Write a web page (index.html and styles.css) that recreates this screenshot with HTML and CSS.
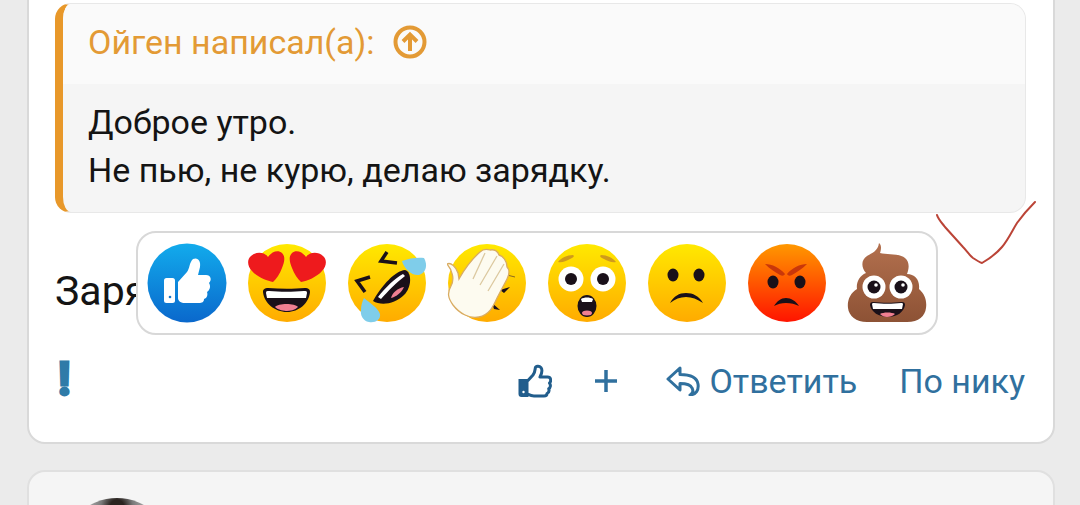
FILE: index.html
```html
<!DOCTYPE html>
<html lang="ru">
<head>
<meta charset="utf-8">
<title>Сообщение</title>
<link rel="stylesheet" href="styles.css">
</head>
<body>
<main class="page">
  <article class="post">
    <blockquote class="quote">
      <header class="quote-head">
        <span>Ойген написал(а):</span>
        <svg class="up-icon" viewBox="0 0 34 34" aria-hidden="true"><circle cx="17" cy="17" r="14.5"/><path d="M17 26V10M10 16.500 17 9.500l7 7"/></svg>
      </header>
      <div class="quote-body">
        <p>Доброе утро.</p>
        <p>Не пью, не курю, делаю зарядку.</p>
      </div>
    </blockquote>
    <p class="post-text">Зарядка</p>
    <footer class="actions">
      <span class="report">!</span>
      <div class="actions-right">
        <svg class="like-icon" viewBox="0 0 34 34" aria-hidden="true">
          <path class="cuff" d="M1.500 16h8v16h-6a2 2 0 0 1-2-2z"/>
          <path class="outline" d="M9.500 17 15 11c2-2.500 2-5 2.300-7 .3-2 4-2.500 5.700-.3 1.700 2.300.7 6-1 9.300h7.500c3.500 0 4 4 2 6 1.500 2 1 4.500-.8 5.800.7 2-.2 4-1.700 4.700 0 1.600-1.200 2.500-3 2.500H16c-3 0-4.500-1-6.500-2"/>
          <circle class="cuff-dot" cx="5.500" cy="28" r="1.200"/>
        </svg>
        <svg class="plus-icon" viewBox="0 0 24 24" aria-hidden="true"><path d="M12 1v22M1 12h22"/></svg>
        <a class="reply">
          <svg class="reply-icon" viewBox="0 0 34 30" aria-hidden="true"><path d="M14 2 2 13l12 11v-6.500c6 0 10.500 1 12 4.500 2 3.500 0 6-2 7 6-.5 9-5 8-11-1-6.500-8-9.500-18-9.500z"/></svg>
          <span>Ответить</span>
        </a>
        <a class="nick">По нику</a>
      </div>
    </footer>

    <div class="picker">
      <svg class="emoji" viewBox="0 0 80 80" aria-label="Нравится">
        <defs>
          <linearGradient id="g-blue" x1="0" y1="0" x2="0" y2="1"><stop offset="0" stop-color="#12abec"/><stop offset="1" stop-color="#0a68cc"/></linearGradient>
          <linearGradient id="g-yellow" x1="0" y1="0" x2="0" y2="1"><stop offset="0" stop-color="#ffe900"/><stop offset="1" stop-color="#ffab00"/></linearGradient>
          <linearGradient id="g-red" x1="0" y1="0" x2="0" y2="1"><stop offset="0" stop-color="#ff9800"/><stop offset="1" stop-color="#ff1400"/></linearGradient>
          <linearGradient id="g-poop" x1="0" y1="0" x2="0" y2="1"><stop offset="0" stop-color="#b3704e"/><stop offset="1" stop-color="#8d5235"/></linearGradient>
        </defs>
        <circle cx="40" cy="40" r="39.500" fill="url(#g-blue)"/>
        <rect x="17" y="35" width="11" height="25" rx="2.500" fill="#fff"/>
        <circle cx="23" cy="54" r="1.300" fill="#1976c9"/>
        <path fill="#fff" d="M31 39 40 29c3-4 2-9 6-13 5-2 8 2 7 8l-2 8h8c5 0 6 5 3 8 2 3 1 7-2 9 1 3 0 6-3 7 0 3-2 4-5 4H38c-4 0-7-2-7-5z"/>
      </svg>

      <svg class="emoji" viewBox="0 0 80 80" aria-label="Люблю">
        <circle cx="40" cy="40" r="39" fill="url(#g-yellow)"/>
        <path fill="#ee1a1d" d="M21 14C24 9 31 6 35 10C39 14 37 20 35 25C33 31 29 36 26 39C20 38 10 34 5 28C0 23 0 16 4 13C9 8 18 9 21 14Z"/>
        <path fill="#ee1a1d" d="M59 14C56 9 49 6 45 10C41 14 43 20 45 25C47 31 51 36 54 39C60 38 70 34 75 28C80 23 80 16 76 13C71 8 62 9 59 14Z"/>
        <path fill="#1a1019" d="M16 49c0-3 2-4 5-4 12 1 26 1 37 0 3 0 5 1 5 4-1 11-11 20-23 20S17 60 16 49z"/>
        <path fill="#fff" d="M19 50c0-2 1-2 3-2 11 1 24 1 35 0 2 0 3 0 3 2l-1 5H20z"/>
        <path fill="#f07f91" d="M28 64c3-4 20-4 23 0-3 3-8 4-11 4s-9-1-12-4z"/>
      </svg>

      <svg class="emoji" viewBox="0 0 80 80" aria-label="Смешно">
        <circle cx="40" cy="40" r="39" fill="url(#g-yellow)"/>
        <path fill="none" stroke="#1a1019" stroke-width="3.500" d="M40 9 34 18 50 20M23 34 10 38 18 49"/>
        <path fill="#1a1019" d="M26 58C35 42 48 28 58 27C65 29 65 44 57 52C48 61 34 63 26 58Z"/>
        <path fill="#fff" d="M31 54C39 44 48 35 56 31L58 33C50 39 41 48 34 56Z"/>
        <path fill="#f07f91" d="M57 44C55 49 49 54 44 55C45 50 51 45 57 44Z"/>
        <path fill="#7fcdea" d="M55 18C62 15 72 14 77 15C81 22 79 30 72 32C65 33 57 26 55 18Z"/>
        <path fill="#7fcdea" d="M17 55C23 60 31 65 33 71C34 77 28 80 22 79C16 78 13 72 14 67C14 63 15 59 17 55Z"/>
      </svg>

      <svg class="emoji" viewBox="0 0 80 80" aria-label="Фейспалм">
        <circle cx="40" cy="40" r="39" fill="url(#g-yellow)"/>
        <path fill="#1a1019" d="M53 47 63 44 57 50zM45 60 53 67 47 66z"/>
        <path fill="none" stroke="#8a6a20" stroke-width="1" d="M60 32 68 34"/>
        <path fill="#fdfbf0" stroke="#d9ac62" stroke-width="1.300" d="M0 21C4 19 9 24 11 30L12 36C17 27 25 16 33 9C36 6 40 6 43 7C47 6 51 8 52 12C56 13 60 18 60 24C63 27 62 32 60 36L50 55C46 64 42 72 32 74C22 76 12 70 6 62C1 55 0 50 4 43C8 36 5 27 0 21Z"/>
        <path fill="none" stroke="#dcc9a0" stroke-width="1.300" d="M38 10 26 36M50 13 33 42M57 21 41 48"/>
      </svg>

      <svg class="emoji" viewBox="0 0 80 80" aria-label="Удивление">
        <circle cx="40" cy="40" r="39" fill="url(#g-yellow)"/>
        <path fill="#cf9a1c" d="M11 19c3-4 9-7 15-7 2 1 0 3-3 4-4 2-8 4-12 3zM69 19c-3-4-9-7-15-7-2 1 0 3 3 4 4 2 8 4 12 3z"/>
        <circle cx="24" cy="36" r="12.500" fill="#fff"/>
        <circle cx="56" cy="36" r="12.500" fill="#fff"/>
        <circle cx="24" cy="36" r="6" fill="#1a1019"/>
        <circle cx="56" cy="36" r="6" fill="#1a1019"/>
        <ellipse cx="40" cy="63" rx="9.500" ry="11" fill="#1a1019"/>
        <path fill="#fff" d="M34 56c3-2 9-2 12 0l-1 3H35z"/>
        <ellipse cx="40" cy="70" rx="5" ry="2.500" fill="#f07f91"/>
      </svg>

      <svg class="emoji" viewBox="0 0 80 80" aria-label="Грусть">
        <circle cx="40" cy="40" r="39" fill="url(#g-yellow)"/>
        <ellipse cx="26" cy="32" rx="5.500" ry="6.500" fill="#1a1019"/>
        <ellipse cx="52" cy="32" rx="5.500" ry="6.500" fill="#1a1019"/>
        <path fill="#1a1019" d="M23 60c4-7 9-10 16-10s13 3 17 10c-6-4-11-6-17-6s-11 2-16 6z"/>
      </svg>

      <svg class="emoji" viewBox="0 0 80 80" aria-label="Злость">
        <circle cx="40" cy="40" r="39" fill="url(#g-red)"/>
        <path fill="#c9370a" d="M18 21c7 0 15 4 20 10-1 2-3 2-5 1-5-3-10-6-15-11zM60 21c-7 0-15 4-20 10 1 2 3 2 5 1 5-3 10-6 15-11z"/>
        <ellipse cx="26" cy="39" rx="5.500" ry="6.500" fill="#1a1019"/>
        <ellipse cx="53" cy="39" rx="5.500" ry="6.500" fill="#1a1019"/>
        <path fill="#1a1019" d="M27 63c3-5 7-8 12-8s10 3 13 8c-4-2-8-3-13-3s-8 1-12 3z"/>
      </svg>

      <svg class="emoji" viewBox="0 0 80 80" aria-label="Какашка">
        <path fill="url(#g-poop)" d="M32 0C35 2 34 7 33 10C40 12 52 10 58 15C63 19 62 26 60 31C68 31 73 37 72 46C78 51 80 58 79 65C78 73 72 79 60 79H20C9 79 2 73 1 65C0 58 3 50 10 46C9 40 12 33 19 30C14 24 14 17 20 13C25 10 31 8 32 0Z"/>
        <circle cx="27" cy="44" r="11.500" fill="#fff"/>
        <circle cx="54" cy="44" r="11.500" fill="#fff"/>
        <circle cx="27" cy="44" r="6.500" fill="#1a1019"/>
        <circle cx="54" cy="44" r="6.500" fill="#1a1019"/>
        <circle cx="29" cy="42" r="1.800" fill="#fff"/>
        <circle cx="56" cy="42" r="1.800" fill="#fff"/>
        <path fill="#1a1019" d="M23 62c0-2 1-3 3-3 9 1 20 1 29 0 2 0 3 1 3 3-1 7-8 12-17 12s-17-5-18-12z"/>
        <path fill="#fff" d="M25 61c0-1 1-1 2-1 8 1 19 1 27 0 1 0 2 0 2 1l-1 5H26z"/>
        <path fill="#f07f91" d="M33 71c3-2 12-2 15 0-2 2-5 3-8 3s-5-1-7-3z"/>
      </svg>
    </div>

    <svg class="check-mark" viewBox="0 0 100 64" aria-hidden="true">
      <path d="M0 13C1 17 5 21 8 25L26 45C30 49 32 53 36 56C39 58 42 60 45 61C52 57 59 52 65 45C71 38 75 29 80 21C85 14 91 7 98 0"/>
    </svg>
  </article>

  <article class="post next-post">
    <div class="avatar"></div>
  </article>
</main>
</body>
</html>
```
FILE: styles.css
```css
* { box-sizing: border-box; }
html, body { margin: 0; height: 505px; overflow: hidden; }
body {
  background: #ebebeb;
  font-family: Roboto, "Liberation Sans", sans-serif;
  color: #141414;
}
.page {
  display: flex;
  flex-direction: column;
  gap: 26px;
  padding: 0 25px 0 27px;
  margin-top: -20px;
}
.post {
  position: relative;
  flex: none;
  height: 464px;
  padding: 21px 27px 0 26px;
  background: #fff;
  border: 2px solid #d9d9d9;
  border-radius: 18px;
}
.quote {
  margin: 0;
  height: 210px;
  border: 1px solid #e8e8e8;
  border-left: 8px solid #e8982a;
  border-radius: 16px;
  background: #f5f5f5;
  overflow: hidden;
}
.quote-head {
  display: flex;
  align-items: center;
  gap: 18px;
  height: 80px;
  padding: 0 0 4px 25px;
  background: #fafafa;
  color: #e39a35;
  font-size: 34px;
}
.up-icon { width: 34px; height: 34px; flex: none; }
.up-icon circle, .up-icon path {
  fill: none;
  stroke: #e39a35;
  stroke-width: 4;
}
.quote-body {
  padding: 14px 0 0 25px;
  font-size: 34px;
  line-height: 48px;
}
.quote-body p { margin: 0; }
.post-text {
  margin: 54px 0 0;
  font-size: 41px;
  line-height: 48px;
}
.actions {
  display: flex;
  justify-content: space-between;
  align-items: center;
  margin-top: 42px;
  height: 48px;
  padding-right: 1px;
  color: #30709e;
}
.report {
  padding: 0 0 4px 3px;
  font-size: 46px;
  font-weight: 700;
  line-height: 44px;
  color: #2f7ba8;
  -webkit-text-stroke: 3px #2f7ba8;
}
.actions-right {
  display: flex;
  align-items: center;
  font-size: 34px;
}
.like-icon { width: 34px; height: 34px; margin-right: 42px; flex: none; }
.like-icon .cuff { fill: #215d8c; stroke: #215d8c; stroke-width: 2; }
.like-icon .outline { fill: none; stroke: #215d8c; stroke-width: 3; stroke-linejoin: round; }
.like-icon .cuff-dot { fill: #fff; }
.plus-icon { width: 24px; height: 24px; margin-right: 48px; flex: none; }
.plus-icon path { fill: none; stroke: #30709e; stroke-width: 3.500; }
.reply { display: flex; align-items: center; gap: 9px; margin-right: 42px; }
.reply-icon { width: 34px; height: 30px; flex: none; }
.reply-icon path { fill: none; stroke: #30709e; stroke-width: 3; stroke-linejoin: round; }
.picker {
  position: absolute;
  left: 107px;
  top: 249px;
  width: 802px;
  height: 104px;
  display: flex;
  align-items: center;
  gap: 20px;
  padding: 0 0 0 9px;
  background: #fff;
  border: 2px solid #d8d8d8;
  border-radius: 20px;
}
.emoji { width: 80px; height: 80px; flex: none; }
.check-mark {
  position: absolute;
  left: 908px;
  top: 220px;
  width: 100px;
  height: 64px;
  overflow: visible;
}
.check-mark path { fill: none; stroke: #bb4437; stroke-width: 2; stroke-linecap: round; }
.next-post {
  height: 120px;
  background: #f5f5f5;
  border-color: #e0e0e0;
}
.avatar {
  position: absolute;
  left: 33px;
  top: 26px;
  width: 110px;
  height: 110px;
  border-radius: 50%;
  background: radial-gradient(circle at 50% 8%, #2a2420 0 6%, #7a7a7a 14%, #b5b5b5 28%);
}
```
